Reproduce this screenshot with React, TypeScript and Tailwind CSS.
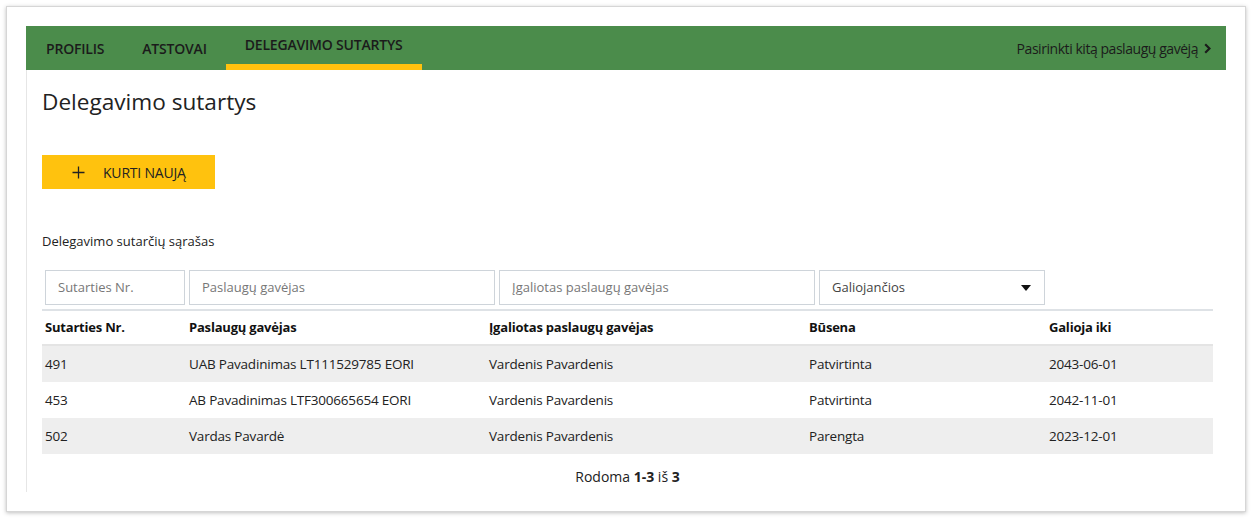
const rows = [
  { nr: "491", gavejas: "UAB Pavadinimas LT111529785 EORI", igaliotas: "Vardenis Pavardenis", busena: "Patvirtinta", iki: "2043-06-01" },
  { nr: "453", gavejas: "AB Pavadinimas LTF300665654 EORI", igaliotas: "Vardenis Pavardenis", busena: "Patvirtinta", iki: "2042-11-01" },
  { nr: "502", gavejas: "Vardas Pavardė", igaliotas: "Vardenis Pavardenis", busena: "Parengta", iki: "2023-12-01" },
];

const cols = ["w-[144px]", "w-[300px]", "w-[320px]", "w-[240px]", "flex-1"];

export default function App() {
  return (
    <div className="w-[1252px] h-[518px] bg-white p-[6px] text-[#222]" style={{ fontFamily: '"Open Sans", "Noto Sans", sans-serif' }}>
      <div className="h-[506px] border border-[#d6d6d6] shadow-[0_1px_4px_rgba(0,0,0,0.25)] px-[19px] pt-[19px]">
        {/* top nav */}
        <div className="h-[44px] bg-[#4b8c4b] flex items-stretch pl-[1px] pr-[15px]">
          <div className="flex items-center px-[19px] text-[14px] font-semibold tracking-[-0.2px] text-[#1b1b1b]">PROFILIS</div>
          <div className="flex items-center px-[19px] text-[14px] font-semibold tracking-[-0.2px] text-[#1b1b1b]">ATSTOVAI</div>
          <div className="flex items-center px-[19px] pb-[6px] text-[14px] font-semibold tracking-[-0.2px] text-[#1b1b1b] border-b-[6px] border-[#ffc20e] pt-[4px]">DELEGAVIMO SUTARTYS</div>
          <div className="ml-auto flex items-center gap-[6px] text-[14px] text-[#1b1b1b] tracking-[-0.45px]">
            Pasirinkti kitą paslaugų gavėją
            <svg width="7" height="11" viewBox="0 0 7 11"><path d="M1.2 1.2L5.5 5.5L1.2 9.8" fill="none" stroke="#1b1b1b" strokeWidth="2.2" /></svg>
          </div>
        </div>

        {/* content */}
        <div className="h-[422px] border-l border-[#e6e6e6] pl-[15px] pr-[13px] pt-[17px]">
          <h1 className="text-[22.6px] leading-[30px] text-[#222]">Delegavimo sutartys</h1>

          <button className="mt-[38px] h-[34px] w-[173px] bg-[#ffc20e] flex items-center text-[14px] text-[#222]">
            <span className="ml-[29px] w-[14px] flex items-center justify-center">
              <svg width="13" height="13" viewBox="0 0 13 13"><path d="M6.5 0.5v12M0.5 6.5h12" stroke="#222" strokeWidth="1.3" /></svg>
            </span>
            <span className="ml-[18px] tracking-[-0.2px]">KURTI NAUJĄ</span>
          </button>

          <div className="mt-[43px] text-[13px] leading-[18px]">Delegavimo sutarčių sąrašas</div>

          <div className="mt-[20px] flex gap-[4px] pl-[3px]">
            <div className="w-[140px] h-[35px] border border-[#ced4da] flex items-center px-[12px] text-[13px] text-[#777]">Sutarties Nr.</div>
            <div className="w-[306px] h-[35px] border border-[#ced4da] flex items-center px-[12px] text-[13px] text-[#777]">Paslaugų gavėjas</div>
            <div className="w-[316px] h-[35px] border border-[#ced4da] flex items-center px-[12px] text-[13px] text-[#777]">Įgaliotas paslaugų gavėjas</div>
            <div className="w-[226px] h-[35px] border border-[#ced4da] flex items-center pl-[12px] pr-[13px] text-[13px] text-[#444]">
              Galiojančios
              <svg className="ml-auto" width="10" height="6" viewBox="0 0 10 6"><path d="M0 0h10L5 6z" fill="#111" /></svg>
            </div>
          </div>

          {/* table */}
          <div className="mt-[4px] border-t-[2px] border-[#dee2e6]">
            <div className="flex h-[35px] items-center border-b-[2px] border-[#e4e4e4] text-[13px] font-bold tracking-[-0.2px] text-[#111]">
              {["Sutarties Nr.", "Paslaugų gavėjas", "Įgaliotas paslaugų gavėjas", "Būsena", "Galioja iki"].map((h, i) => (
                <div key={h} className={`${cols[i]} px-[3px]`}>{h}</div>
              ))}
            </div>
            {rows.map((r, idx) => (
              <div key={r.nr} className={`flex h-[36px] items-center text-[13.5px] tracking-[-0.2px] text-[#222] ${idx % 2 === 0 ? "bg-[#eeeeee]" : "bg-white"}`}>
                <div className={`${cols[0]} px-[3px]`}>{r.nr}</div>
                <div className={`${cols[1]} px-[3px]`}>{r.gavejas}</div>
                <div className={`${cols[2]} px-[3px]`}>{r.igaliotas}</div>
                <div className={`${cols[3]} px-[3px]`}>{r.busena}</div>
                <div className={`${cols[4]} px-[3px]`}>{r.iki}</div>
              </div>
            ))}
          </div>

          <div className="mt-[14px] text-center text-[14px] leading-[18px]">
            Rodoma <b>1-3</b> iš <b>3</b>
          </div>
        </div>
      </div>
    </div>
  );
}
